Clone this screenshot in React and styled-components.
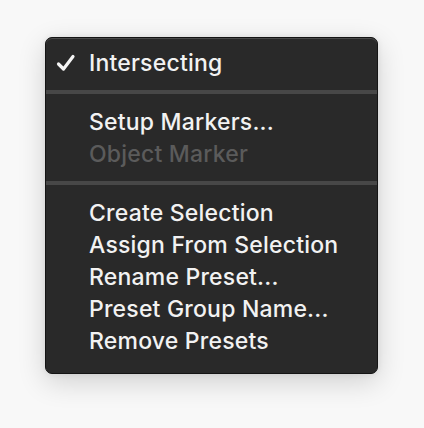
import React from "react";
import styled, { createGlobalStyle } from "styled-components";

const Global = createGlobalStyle`
  html, body { margin: 0; padding: 0; background: #f8f8f8; }
  body { width: 424px; height: 428px; overflow: hidden; }
`;

const Page = styled.div`
  width: 424px;
  height: 428px;
  padding: 37px 0 0 45px;
  box-sizing: border-box;
  font-family: Inter, "Noto Sans", sans-serif;
`;

const Menu = styled.div`
  width: 333px;
  box-sizing: border-box;
  background: #292929;
  border: 1px solid #141414;
  border-radius: 7px;
  box-shadow: inset 0 1px 0 #4a4a4a, 0 8px 28px rgba(0, 0, 0, 0.16),
    0 0 6px rgba(0, 0, 0, 0.08);
  padding: 9px 0 16px;
  display: flex;
  flex-direction: column;
`;

const Item = styled.div`
  height: 32px;
  display: flex;
  align-items: center;
  padding-left: 43px;
  position: relative;
  font-size: 23px;
  font-weight: 500;
  letter-spacing: 0.2px;
  color: ${(p) => (p.$disabled ? "#5b5b5b" : "#f2f2f2")};
`;

const Check = styled.svg`
  position: absolute;
  left: 10px;
  top: 7px;
  width: 20px;
  height: 18px;
`;

const Separator = styled.div`
  height: 4px;
  background: #474747;
  margin: 11px 0 12px;
`;

export default function App() {
  return (
    <Page>
      <Global />
      <Menu>
        <Item>
          <Check viewBox="0 0 20 18">
            <path
              d="M2.5 10 L7.5 15 L17 2.5"
              fill="none"
              stroke="#f4f4f4"
              strokeWidth="3.2"
              strokeLinecap="round"
              strokeLinejoin="round"
            />
          </Check>
          Intersecting
        </Item>
        <Separator />
        <Item>Setup Markers...</Item>
        <Item $disabled>Object Marker</Item>
        <Separator />
        <Item>Create Selection</Item>
        <Item>Assign From Selection</Item>
        <Item>Rename Preset...</Item>
        <Item>Preset Group Name...</Item>
        <Item>Remove Presets</Item>
      </Menu>
    </Page>
  );
}
